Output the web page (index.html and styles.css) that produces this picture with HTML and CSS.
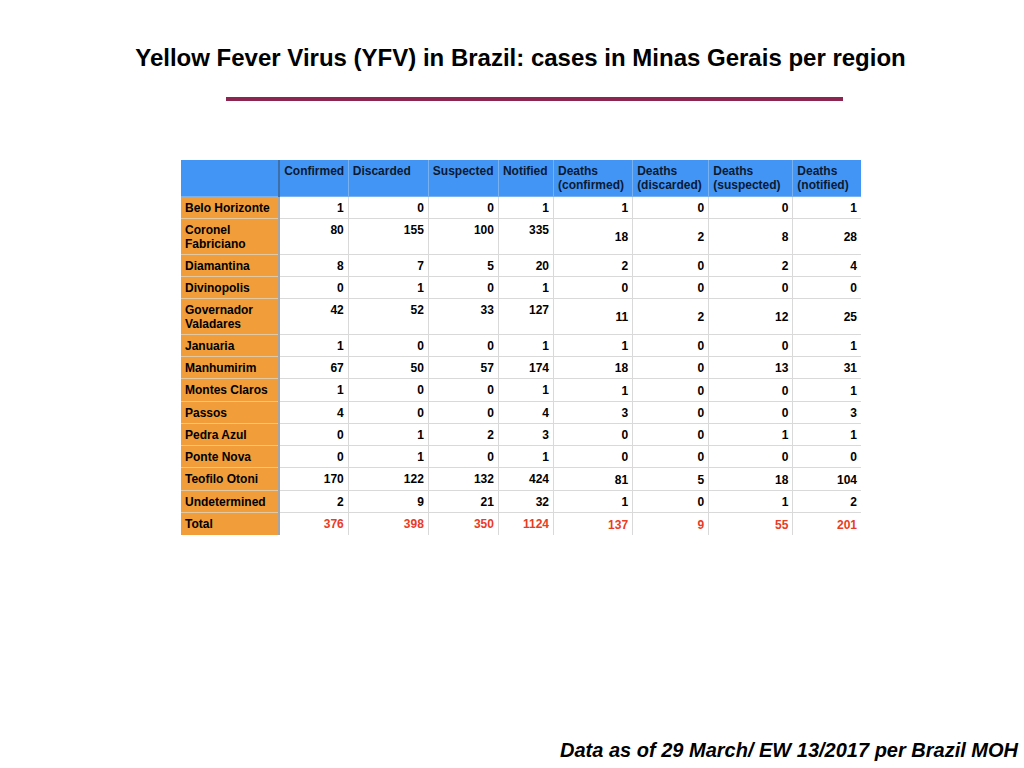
FILE: index.html
```html
<!DOCTYPE html>
<html>
<head>
<meta charset="utf-8">
<link rel="stylesheet" href="styles.css">
</head>
<body>
<div class="slide">
  <h1 class="title">Yellow Fever Virus (YFV) in Brazil: cases in Minas Gerais per region</h1>
  <div class="rule"></div>
  <table class="data">
    <colgroup>
      <col class="c0"><col class="c1"><col class="c2"><col class="c3"><col class="c4"><col class="c5"><col class="c6"><col class="c7"><col class="c8">
    </colgroup>
    <thead>
      <tr>
        <th class="corner"></th>
        <th>Confirmed</th><th>Discarded</th><th>Suspected</th><th>Notified</th>
        <th>Deaths (confirmed)</th><th>Deaths (discarded)</th><th>Deaths (suspected)</th><th>Deaths (notified)</th>
      </tr>
    </thead>
    <tbody>
      <tr><th>Belo Horizonte</th><td>1</td><td>0</td><td>0</td><td>1</td><td class="d">1</td><td class="d">0</td><td class="d">0</td><td class="d">1</td></tr>
      <tr class="tall"><th>Coronel Fabriciano</th><td>80</td><td>155</td><td>100</td><td>335</td><td class="d">18</td><td class="d">2</td><td class="d">8</td><td class="d">28</td></tr>
      <tr><th>Diamantina</th><td>8</td><td>7</td><td>5</td><td>20</td><td class="d">2</td><td class="d">0</td><td class="d">2</td><td class="d">4</td></tr>
      <tr><th>Divinopolis</th><td>0</td><td>1</td><td>0</td><td>1</td><td class="d">0</td><td class="d">0</td><td class="d">0</td><td class="d">0</td></tr>
      <tr class="tall"><th>Governador Valadares</th><td>42</td><td>52</td><td>33</td><td>127</td><td class="d">11</td><td class="d">2</td><td class="d">12</td><td class="d">25</td></tr>
      <tr><th>Januaria</th><td>1</td><td>0</td><td>0</td><td>1</td><td class="d">1</td><td class="d">0</td><td class="d">0</td><td class="d">1</td></tr>
      <tr><th>Manhumirim</th><td>67</td><td>50</td><td>57</td><td>174</td><td class="d">18</td><td class="d">0</td><td class="d">13</td><td class="d">31</td></tr>
      <tr class="mid"><th>Montes Claros</th><td>1</td><td>0</td><td>0</td><td>1</td><td class="d">1</td><td class="d">0</td><td class="d">0</td><td class="d">1</td></tr>
      <tr><th>Passos</th><td>4</td><td>0</td><td>0</td><td>4</td><td class="d">3</td><td class="d">0</td><td class="d">0</td><td class="d">3</td></tr>
      <tr><th>Pedra Azul</th><td>0</td><td>1</td><td>2</td><td>3</td><td class="d">0</td><td class="d">0</td><td class="d">1</td><td class="d">1</td></tr>
      <tr><th>Ponte Nova</th><td>0</td><td>1</td><td>0</td><td>1</td><td class="d">0</td><td class="d">0</td><td class="d">0</td><td class="d">0</td></tr>
      <tr class="mid"><th>Teofilo Otoni</th><td>170</td><td>122</td><td>132</td><td>424</td><td class="d">81</td><td class="d">5</td><td class="d">18</td><td class="d">104</td></tr>
      <tr><th>Undetermined</th><td>2</td><td>9</td><td>21</td><td>32</td><td class="d">1</td><td class="d">0</td><td class="d">1</td><td class="d">2</td></tr>
      <tr class="total mid"><th>Total</th><td>376</td><td>398</td><td>350</td><td>1124</td><td class="d">137</td><td class="d">9</td><td class="d">55</td><td class="d">201</td></tr>
    </tbody>
  </table>
  <div class="spacer"></div>
  <p class="source">Data as of 29 March/ EW 13/2017 per Brazil MOH</p>
</div>
</body>
</html>
```
FILE: styles.css
```css
html, body {
  margin: 0;
  padding: 0;
  background: #ffffff;
}
.slide {
  width: 1024px;
  height: 768px;
  display: flex;
  flex-direction: column;
  font-family: "Liberation Sans", Arial, sans-serif;
  color: #000;
}
.title {
  margin: 44px 0 0 17px;
  font-size: 24px;
  line-height: 28px;
  font-weight: bold;
  text-align: center;
}
.rule {
  margin: 25px 0 0 226px;
  width: 617px;
  height: 4px;
  background: #8c2550;
}
.data {
  margin: 59px 0 0 181px;
  border-collapse: collapse;
  table-layout: fixed;
  width: 680px;
  font-size: 12px;
  line-height: 14px;
  font-weight: bold;
}
.c0 { width: 98px; }
.c1 { width: 69px; }
.c2 { width: 80px; }
.c3 { width: 70px; }
.c4 { width: 55px; }
.c5 { width: 79px; }
.c6 { width: 76px; }
.c7 { width: 84px; }
.c8 { width: 68px; }
.data th, .data td {
  padding: 4px 4px 3px 4px;
  border: 1px solid #d9d9d9;
  vertical-align: top;
}
.data tr.tall th, .data tr.tall td {
  height: 28px;
}
.data tr.mid th, .data tr.mid td {
  height: 15px;
}
.data thead th {
  background: #4395f5;
  color: #0a1a33;
  text-align: left;
  height: 29px;
  border-color: #79b0ee;
  border-top: 0;
}
.data thead th.corner {
  border-right: 2px solid #3f6fa8;
  border-left: 0;
}
.data tbody th {
  background: #f09d3a;
  text-align: left;
  border-left: 0;
  border-right: 2px solid #a5a5a5;
  border-color: #e3c8a2 #a5a5a5 #e3c8a2 #f09d3a;
}
.data td {
  text-align: right;
  background: #ffffff;
}
.data td.d {
  vertical-align: middle;
}
.data thead th:last-child,
.data td:last-child {
  border-right: 0;
}
.data tr.total th,
.data tr.total td {
  border-bottom: 0;
}
.data tr.total td {
  color: #ea3b24;
}
.spacer {
  flex: 1;
}
.source {
  margin: 0 6px 6px 0;
  text-align: right;
  font-size: 20px;
  line-height: 24px;
  font-weight: bold;
  font-style: italic;
}
```
